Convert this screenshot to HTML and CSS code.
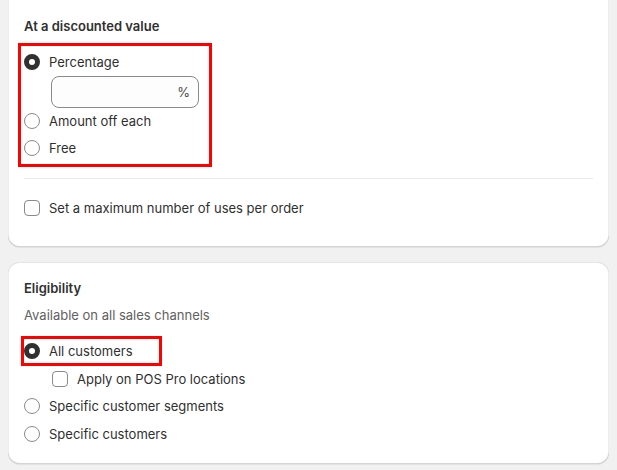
FILE: index.html
```html
<!DOCTYPE html>
<html lang="en">
<head>
<meta charset="utf-8">
<title>Discount settings</title>
<link rel="stylesheet" href="styles.css">
</head>
<body>
<main class="page">
  <section class="card card-first">
    <h2 class="card-title">At a discounted value</h2>
    <div class="highlight highlight-value">
      <label class="row"><span class="radio checked"></span><span>Percentage</span></label>
      <div class="input-wrap">
        <div class="text-input"><span class="suffix">%</span></div>
      </div>
      <label class="row row-tight"><span class="radio"></span><span>Amount off each</span></label>
      <label class="row"><span class="radio"></span><span>Free</span></label>
    </div>
    <hr class="divider">
    <label class="row max-row"><span class="checkbox"></span><span>Set a maximum number of uses per order</span></label>
  </section>

  <section class="card card-second">
    <h2 class="card-title">Eligibility</h2>
    <p class="subdued">Available on all sales channels</p>
    <div class="list">
      <div class="highlight highlight-all">
        <label class="row"><span class="radio checked"></span><span>All customers</span></label>
      </div>
      <label class="row nested"><span class="checkbox"></span><span>Apply on POS Pro locations</span></label>
      <label class="row"><span class="radio"></span><span>Specific customer segments</span></label>
      <label class="row"><span class="radio"></span><span>Specific customers</span></label>
    </div>
  </section>
</main>
</body>
</html>
```

FILE: styles.css
```css
* { box-sizing: border-box; }

html, body {
  margin: 0;
  padding: 0;
  background: #f1f1f1;
}

body {
  font-family: Inter, "Noto Sans", "Liberation Sans", sans-serif;
  font-size: 13px;
  line-height: 20px;
  color: #303030;
  overflow: hidden;
  height: 470px;
}

.page {
  display: flex;
  flex-direction: column;
  gap: 15px;
  padding: 0 8px;
}

.card {
  background: #ffffff;
  border-radius: 12px;
  padding: 16px;
  box-shadow:
    0 1px 0 0 rgba(26, 26, 26, 0.07),
    inset 0 1px 0 0 rgba(204, 204, 204, 0.5),
    inset 0 -1px 0 0 rgba(0, 0, 0, 0.17),
    inset -1px 0 0 0 rgba(0, 0, 0, 0.07),
    inset 1px 0 0 0 rgba(0, 0, 0, 0.07);
}

.card-first {
  margin-top: -20px;
  padding-top: 36px;
  padding-bottom: 27px;
}

.card-second {
  padding-bottom: 18px;
}

.card-title {
  margin: 0;
  font-size: 13px;
  line-height: 20px;
  font-weight: 600;
  color: #303030;
}

.subdued {
  margin: 7px 0 0;
  color: #616161;
}

.row {
  display: flex;
  align-items: center;
  gap: 9px;
  height: 24px;
}

.radio {
  flex: none;
  width: 16px;
  height: 16px;
  border-radius: 50%;
  border: 1.5px solid #8a8a8a;
  background: #fff;
}

.radio.checked {
  border: 5px solid #303030;
}

.checkbox {
  flex: none;
  width: 16px;
  height: 16px;
  border-radius: 4px;
  border: 1.5px solid #8a8a8a;
  background: #fff;
}

.highlight {
  border: 3px solid #ff0000;
}

.highlight-value {
  margin: 7px 0 0 -6px;
  width: 194px;
  padding: 4px 0 4px 3px;
  display: flex;
  flex-direction: column;
}

.input-wrap {
  padding-left: 27px;
  margin-top: 2px;
}

.text-input {
  width: 148px;
  height: 32px;
  border: 1px solid #8a8a8a;
  border-radius: 8px;
  background: #fdfdfd;
  display: flex;
  align-items: center;
  justify-content: flex-end;
  padding-right: 8px;
}

.suffix {
  color: #4a4a4a;
}

.row-tight {
  margin-top: 1px;
  margin-bottom: 3px;
}

.divider {
  margin: 11px 0 0;
  border: 0;
  border-top: 1px solid #ebebeb;
}

.max-row {
  margin-top: 17px;
}

.list {
  margin-top: 11px;
  display: flex;
  flex-direction: column;
  gap: 3.5px;
}

.highlight-all {
  margin-left: -3px;
  margin-bottom: -3px;
  width: 141px;
}

.nested {
  padding-left: 28px;
}
```
